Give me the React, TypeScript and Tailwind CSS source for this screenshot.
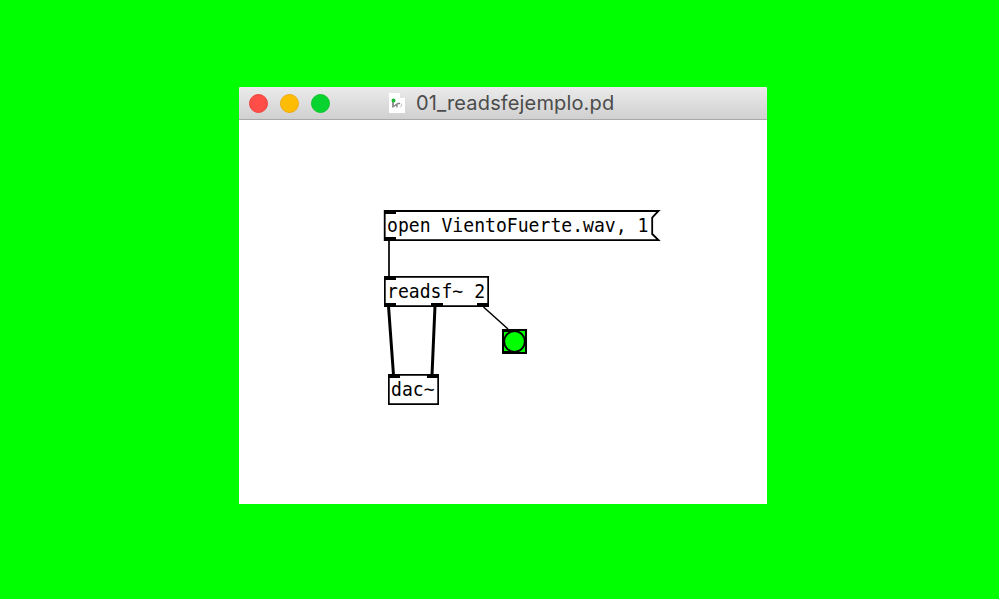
import type { ReactNode } from "react";

function Ports({ count }: { count: number }) {
  return (
    <div className="flex h-1 justify-between">
      {Array.from({ length: count }, (_, i) => (
        <span key={i} className="h-1 w-3 bg-black" />
      ))}
    </div>
  );
}

type NodeProps = { className: string; inlets: number; outlets: number; children: ReactNode };

function PatchNode({ className, inlets, outlets, children }: NodeProps) {
  return (
    <div className={`absolute flex flex-col justify-between ${className}`}>
      <Ports count={inlets} />
      <span className="-my-2 origin-[0_16px] scale-y-[1.07] whitespace-pre pl-[3px] font-['DejaVu_Sans_Mono',monospace] text-[18.1px] leading-[22px] text-black">
        {children}
      </span>
      <Ports count={outlets} />
    </div>
  );
}

function TitleBar() {
  return (
    <header className="flex h-[33px] items-center border-b border-[#a8a8a8] bg-linear-to-b from-[#ebebeb] to-[#d0d0d0] pl-2.5">
      <div className="flex gap-3">
        <span className="size-[19px] rounded-full border border-[#ee443d] bg-[#ff4d47]" />
        <span className="size-[19px] rounded-full border border-[#efaa0b] bg-[#ffbc05]" />
        <span className="size-[19px] rounded-full border border-[#0fc42b] bg-[#08d32f]" />
      </div>
      <svg className="ml-[59px] h-5 w-4" viewBox="0 0 16 20">
        <path d="M0 0H11L16 5V20H0Z" fill="#fff" />
        <path d="M11 0V5H16Z" fill="#e2e2e2" />
        <path d="M4 7V14.5" stroke="#666" strokeWidth="1.4" />
        <path d="M4.5 13.5L8 11V14.5M8.5 10.5H11" fill="none" stroke="#858585" strokeWidth="1.3" />
        <path d="M12 10.5Q14 12.5 11 14.5" fill="none" stroke="#bbb" />
        <circle cx="4.5" cy="7.5" r="2" fill="#18bd32" />
      </svg>
      <h1 className="ml-[11px] whitespace-pre font-[Inter,sans-serif] text-[20px] leading-6 tracking-[0.15px] text-[#4b4b4b]">
        01_readsfejemplo.pd
      </h1>
    </header>
  );
}

function Patch() {
  return (
    <main className="relative flex-1 bg-white">
      <svg className="absolute inset-0 size-full" viewBox="0 0 528 384" fill="none" stroke="#000">
        <path d="M150 121V157" strokeWidth="1.7" />
        <path d="M149.5 186L154.5 255M196 186L193 255" strokeWidth="3" />
        <path d="M244.5 187L269 209" strokeWidth="1.5" />
        <path d="M419.5 91H145.7V120.2H419.5L413.2 114V97.5Z" strokeWidth="1.8" />
      </svg>

      <PatchNode className="left-[145px] top-[90px] h-[31px] w-[274px]" inlets={1} outlets={1}>
        open VientoFuerte.wav, 1
      </PatchNode>
      <PatchNode
        className="left-[145px] top-[156px] h-[31px] w-[105px] shadow-[inset_0_0_0_1.7px_#000]"
        inlets={1}
        outlets={3}
      >
        readsf~ 2
      </PatchNode>
      <PatchNode
        className="left-[149px] top-[254px] h-[31px] w-[51px] shadow-[inset_0_0_0_1.7px_#000]"
        inlets={2}
        outlets={0}
      >
        dac~
      </PatchNode>

      <svg className="absolute left-[263px] top-[209px] size-[25px]" viewBox="0 0 25 25">
        <rect x="1" y="1" width="23" height="23" fill="#00ff00" stroke="#000" strokeWidth="2" />
        <circle cx="12.5" cy="12.5" r="10.3" fill="none" stroke="#000" strokeWidth="1.8" />
        <path d="M0 1.5H11M0 23.5H11" stroke="#000" strokeWidth="3" />
      </svg>
    </main>
  );
}

export default function App() {
  return (
    <div className="flex h-[599px] w-[999px] items-start justify-center overflow-hidden bg-[#00ff00] pl-[7px] pt-[87px]">
      <section className="flex h-[417px] w-[528px] flex-col overflow-hidden rounded-t-[1px]">
        <TitleBar />
        <Patch />
      </section>
    </div>
  );
}
